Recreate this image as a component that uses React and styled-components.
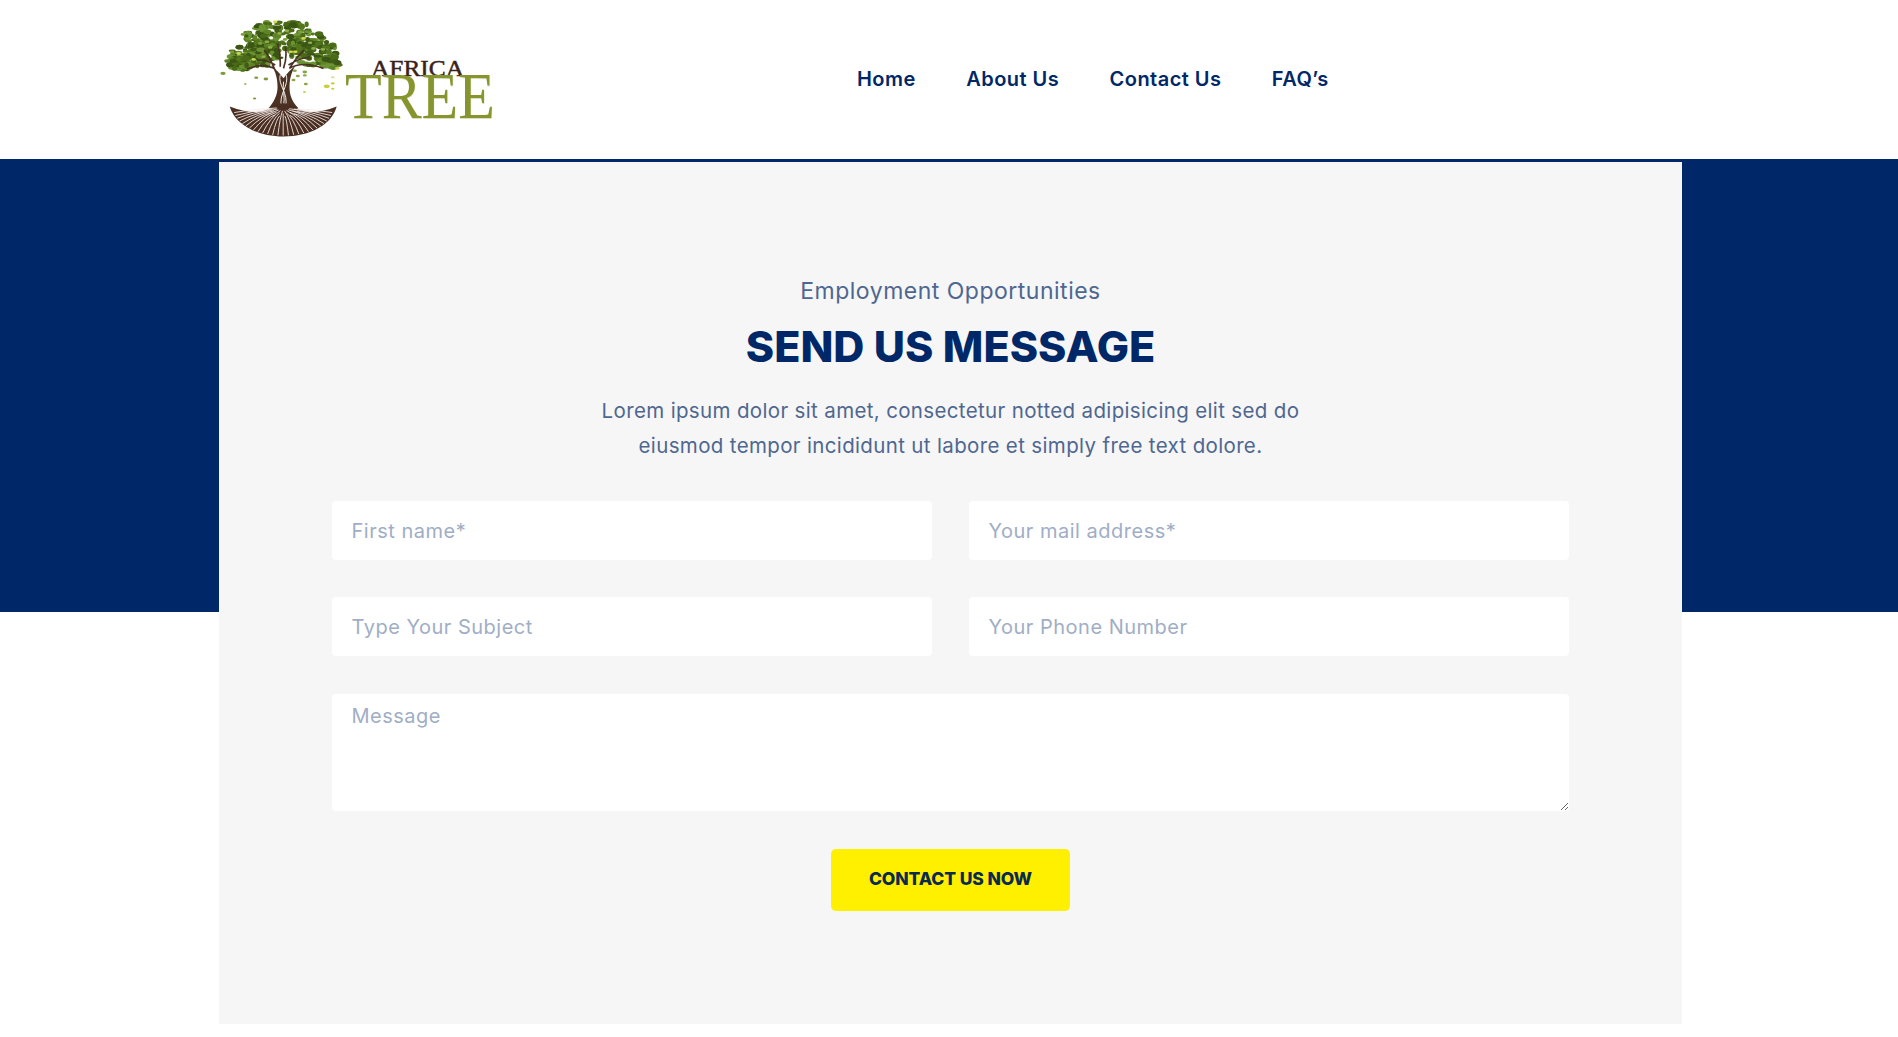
import React from "react";
import styled, { createGlobalStyle } from "styled-components";

const FONT = `"Inter", "Noto Sans", "Liberation Sans", sans-serif`;

const Global = createGlobalStyle`
  * { box-sizing: border-box; }
  html, body { margin: 0; padding: 0; background: #fff; }
  body { font-family: ${FONT}; overflow: hidden; }
`;

const Page = styled.div`
  width: 1898px;
  height: 1037px;
  overflow: hidden;
  background: #fff;
`;

const Header = styled.header`
  height: 162px;
  padding: 0 0 0 219px;
  display: flex;
  align-items: center;
  border-bottom: 3px solid #002868;
  background: #fff;
`;

const LogoSvg = styled.svg`
  width: 280px;
  height: 133px;
  flex: none;
  display: block;
`;

const Nav = styled.nav`
  margin-left: 358px;
  padding-bottom: 2px;
  display: flex;
  gap: 50.5px;
`;

const NavLink = styled.a`
  font-size: 20px;
  font-weight: 600;
  line-height: 30px;
  color: #002868;
  letter-spacing: 0.45px;
  text-decoration: none;
`;

const Hero = styled.section`
  height: 875px;
  padding: 0 216px 13px 219px;
  background: linear-gradient(#002868 450px, #fff 450px);
`;

const Card = styled.div`
  height: 862px;
  background: #f6f6f6;
  padding: 111px 113px 0;
  display: flex;
  flex-direction: column;
  align-items: center;
`;

const Eyebrow = styled.p`
  margin: 0;
  font-size: 23px;
  line-height: 36px;
  letter-spacing: 0.5px;
  color: #4f6790;
`;

const Title = styled.h2`
  margin: 10px 0 0;
  font-size: 43px;
  font-weight: 800;
  line-height: 54px;
  color: #002868;
`;

const Lead = styled.p`
  margin: 20px 0 0;
  font-size: 20.5px;
  line-height: 35px;
  letter-spacing: 0.35px;
  color: #4f6790;
  text-align: center;
`;

const Form = styled.form`
  width: 100%;
  margin-top: 38px;
  display: grid;
  grid-template-columns: 600px 1fr;
  column-gap: 37px;
  row-gap: 37px;
`;

const fieldStyles = `
  width: 100%;
  border: 0;
  outline: 0;
  background: #fff;
  border-radius: 4px;
  font-family: ${FONT};
  font-size: 20px;
  letter-spacing: 0.5px;
  color: #002868;
  padding-left: 19.5px;
  padding-right: 20px;
  &::placeholder { color: #a0aec5; opacity: 1; }
`;

const Field = styled.input`
  ${fieldStyles}
  height: 59px;
`;

const Message = styled.textarea`
  ${fieldStyles}
  grid-column: 1 / -1;
  margin-top: 1px;
  height: 117px;
  padding-top: 7px;
  line-height: 30px;
  resize: vertical;
  display: block;
`;

const Submit = styled.button`
  margin-top: 38px;
  width: 239px;
  height: 62px;
  padding: 0 0 3px;
  border: 0;
  border-radius: 5px;
  background: #fff000;
  color: #0a2a50;
  font-family: ${FONT};
  font-size: 17.5px;
  font-weight: 800;
  letter-spacing: -0.1px;
`;

/* Seeded scatter so the tree's foliage is drawn the same on every run. */
const makeRandom = (seed) => {
  let s = seed;
  return () => {
    s = (s * 16807) % 2147483647;
    return (s - 1) / 2147483646;
  };
};

const lobes = [
  { cx: 250, cy: 112, rx: 118, ry: 50, n: 170 },
  { cx: 165, cy: 165, rx: 78, ry: 36, n: 90 },
  { cx: 345, cy: 160, rx: 72, ry: 38, n: 90 },
  { cx: 122, cy: 190, rx: 40, ry: 18, n: 60 },
  { cx: 388, cy: 185, rx: 30, ry: 20, n: 50 },
];

const greens = ["#3f5c14", "#4a6a18", "#55771f", "#5f8427", "#3a5512", "#6c9433"];

const leaves = (() => {
  const r = makeRandom(4711);
  const out = [];
  lobes.forEach((l) => {
    for (let i = 0; i < l.n; i += 1) {
      const a = r() * Math.PI * 2;
      const d = Math.sqrt(r());
      out.push({
        x: l.cx + Math.cos(a) * d * l.rx,
        y: l.cy + Math.sin(a) * d * l.ry,
        rx: 6 + r() * 8,
        ry: 4 + r() * 5,
        c: greens[Math.floor(r() * greens.length)],
      });
    }
  });
  return out;
})();

const dots = [
  [200, 125, "#8fb04a"], [238, 100, "#8fb04a"], [260, 92, "#8fb04a"], [310, 115, "#d4d84f"], [330, 128, "#8fb04a"],
  [368, 148, "#8fb04a"], [272, 155, "#c9d65a"], [210, 142, "#8fb04a"], [160, 178, "#c9d65a"], [115, 160, "#c9d65a"],
  [95, 155, "#7f9a3a"], [225, 65, "#d4d84f"], [128, 103, "#7f9a3a"], [190, 170, "#8fb04a"], [340, 145, "#8fb04a"],
  [285, 155, "#d4d84f"], [180, 130, "#7fa23a"], [255, 118, "#7fa23a"], [300, 95, "#7fa23a"], [412, 205, "#c9cf3e"],
];

const falling = [
  [68, 220, 8, "#7f9a3a"], [168, 233, 6, "#7f9a3a"], [197, 237, 7, "#7f9a3a"], [135, 252, 4, "#7f9a3a"],
  [163, 296, 5, "#7f9a3a"], [284, 212, 6, "#8aa645"], [314, 216, 7, "#8aa645"], [293, 228, 6, "#8aa645"],
  [280, 240, 6, "#8aa645"], [314, 226, 6, "#8aa645"], [317, 252, 6, "#8aa645"], [313, 276, 5, "#c9d65a"],
  [380, 259, 9, "#c9cf3e"], [398, 250, 6, "#c9cf3e"], [398, 232, 5, "#d8dd7c"], [398, 266, 5, "#c9cf3e"],
];

/* Thin pale gaps fanning out from the trunk foot to the rim of the root bowl. */
const rootLines = (() => {
  const out = [];
  const cx = 249;
  const cy = 322;
  for (let i = 0; i <= 26; i += 1) {
    const t = 0.06 + (i / 26) * 0.88;
    const a = Math.PI * (1 - t);
    const ex = cx + Math.cos(a) * 150;
    const ey = cy + Math.sin(a) * 85;
    const start = 20 + (i % 3) * 14;
    const sx = cx + Math.cos(a) * start;
    const sy = cy + Math.sin(a) * start * 0.55;
    const qx = cx + Math.cos(a) * 95;
    const qy = cy + Math.sin(a) * 34;
    out.push(`M${sx.toFixed(1)} ${sy.toFixed(1)} Q${qx.toFixed(1)} ${qy.toFixed(1)} ${ex.toFixed(1)} ${ey.toFixed(1)}`);
  }
  return out;
})();

const Logo = () => (
  <LogoSvg viewBox="57 38.5 840 400" aria-label="Africa Tree">
    <defs>
      <filter id="soft" x="-5%" y="-5%" width="110%" height="110%">
        <feGaussianBlur stdDeviation="1" />
      </filter>
      <filter id="lift" x="-5%" y="-5%" width="110%" height="120%">
        <feDropShadow dx="1" dy="3" stdDeviation="2" floodColor="#87952f" floodOpacity="0.3" />
      </filter>
    </defs>
    <g filter="url(#soft)">
      {leaves.map((l, i) => (
        <ellipse key={i} cx={l.x} cy={l.y} rx={l.rx} ry={l.ry} fill={l.c} />
      ))}
      {dots.map(([x, y, c]) => (
        <ellipse key={`${x}-${y}`} cx={x} cy={y} rx="7" ry="4" fill={c} />
      ))}
      <path
        d="M140 207 Q185 188 222 205 Q208 170 192 150 M370 205 Q305 182 268 205 Q288 172 312 150 M240 200 Q242 165 232 130 M250 205 Q262 170 255 140 M170 180 Q200 178 225 195 M330 170 Q295 175 265 195"
        stroke="#4b3024"
        strokeWidth="5"
        fill="none"
      />
      <path
        d="M212 195 C228 215 232 240 232 262 C232 285 222 305 205 325 L295 325 C275 305 268 285 268 262 C268 240 272 220 285 198 C268 210 258 225 250 235 C242 225 228 208 212 195 Z"
        fill="#4b3024"
      />
      <path
        d="M240 225 C232 255 266 280 256 320 M258 225 C268 255 234 285 244 320 M250 245 C246 270 256 290 250 320"
        stroke="#f3eee9"
        strokeWidth="3"
        fill="none"
      />
      <path
        d="M88 320 Q170 352 215 322 Q232 310 250 310 Q268 310 285 322 Q330 352 410 320 C395 375 330 410 250 410 C170 410 105 375 88 320 Z"
        fill="#4b2f24"
      />
      {rootLines.map((d) => (
        <path key={d} d={d} stroke="#f3eee9" strokeWidth="2.6" fill="none" />
      ))}
      {falling.map(([x, y, r, c]) => (
        <ellipse key={`${x}-${y}`} cx={x} cy={y} rx={r} ry={r * 0.6} fill={c} />
      ))}
    </g>
    <text x="513" y="227" fontFamily="'Liberation Serif', serif" fontSize="72" fill="#3a221b" stroke="#3a221b" strokeWidth="1.4" textLength="280" lengthAdjust="spacingAndGlyphs">AFRICA</text>
    <text transform="translate(435 353) scale(0.91 1)" fontFamily="'Liberation Serif', serif" fontSize="198" fill="#87952f" filter="url(#lift)">TREE</text>
  </LogoSvg>
);

export default function App() {
  return (
    <Page>
      <Global />
      <Header>
        <Logo />
        <Nav>
          <NavLink href="#">Home</NavLink>
          <NavLink href="#">About Us</NavLink>
          <NavLink href="#">Contact Us</NavLink>
          <NavLink href="#">FAQ’s</NavLink>
        </Nav>
      </Header>
      <Hero>
        <Card>
          <Eyebrow>Employment Opportunities</Eyebrow>
          <Title>SEND US MESSAGE</Title>
          <Lead>
            Lorem ipsum dolor sit amet, consectetur notted adipisicing elit sed do
            <br />
            eiusmod tempor incididunt ut labore et simply free text dolore.
          </Lead>
          <Form>
            <Field placeholder="First name*" />
            <Field placeholder="Your mail address*" />
            <Field placeholder="Type Your Subject" />
            <Field placeholder="Your Phone Number" />
            <Message placeholder="Message" />
          </Form>
          <Submit type="button">CONTACT US NOW</Submit>
        </Card>
      </Hero>
    </Page>
  );
}
